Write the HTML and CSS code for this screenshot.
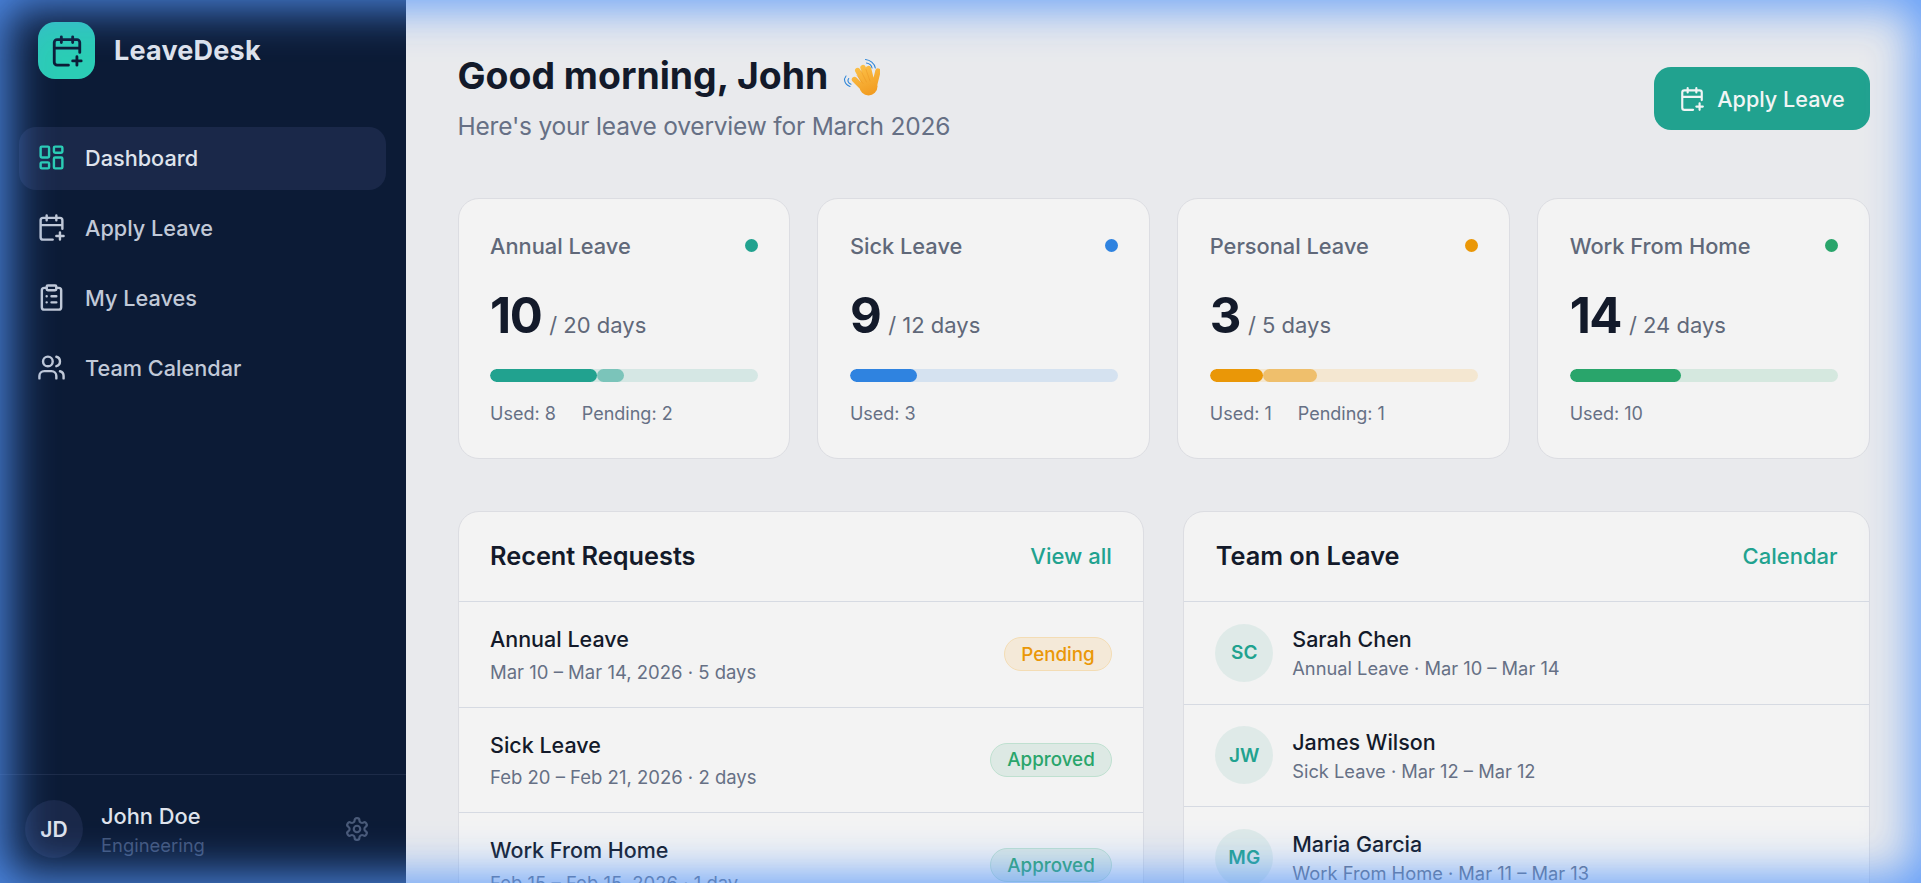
FILE: index.html
```html
<!DOCTYPE html>
<html lang="en">
<head>
<meta charset="utf-8">
<title>LeaveDesk</title>
<link rel="stylesheet" href="styles.css">
</head>
<body>
<svg class="sprites" aria-hidden="true">
  <symbol id="i-cal" viewBox="0 0 24 24"><path d="M8 2v4M16 2v4M21 13V6a2 2 0 0 0-2-2H5a2 2 0 0 0-2 2v14a2 2 0 0 0 2 2h8M3 10h18M16 19h6M19 16v6"/></symbol>
  <symbol id="i-dash" viewBox="0 0 24 24"><rect x="3" y="3" width="7" height="9" rx="1"/><rect x="14" y="3" width="7" height="5" rx="1"/><rect x="14" y="12" width="7" height="9" rx="1"/><rect x="3" y="16" width="7" height="5" rx="1"/></symbol>
  <symbol id="i-clip" viewBox="0 0 24 24"><rect x="8" y="2" width="8" height="4" rx="1"/><path d="M16 4h2a2 2 0 0 1 2 2v14a2 2 0 0 1-2 2H6a2 2 0 0 1-2-2V6a2 2 0 0 1 2-2h2M12 11h4M12 16h4M8 11h.01M8 16h.01"/></symbol>
  <symbol id="i-users" viewBox="0 0 24 24"><path d="M16 21v-2a4 4 0 0 0-4-4H6a4 4 0 0 0-4 4v2M22 21v-2a4 4 0 0 0-3-3.87M16 3.13a4 4 0 0 1 0 7.75"/><circle cx="9" cy="7" r="4"/></symbol>
  <symbol id="i-gear" viewBox="0 0 24 24"><path d="M12.22 2h-.44a2 2 0 0 0-2 2v.18a2 2 0 0 1-1 1.73l-.43.25a2 2 0 0 1-2 0l-.15-.08a2 2 0 0 0-2.73.73l-.22.38a2 2 0 0 0 .73 2.73l.15.1a2 2 0 0 1 1 1.72v.51a2 2 0 0 1-1 1.74l-.15.09a2 2 0 0 0-.73 2.73l.22.38a2 2 0 0 0 2.73.73l.15-.08a2 2 0 0 1 2 0l.43.25a2 2 0 0 1 1 1.73V20a2 2 0 0 0 2 2h.44a2 2 0 0 0 2-2v-.18a2 2 0 0 1 1-1.73l.43-.25a2 2 0 0 1 2 0l.15.08a2 2 0 0 0 2.73-.73l.22-.39a2 2 0 0 0-.73-2.73l-.15-.08a2 2 0 0 1-1-1.74v-.5a2 2 0 0 1 1-1.74l.15-.09a2 2 0 0 0 .73-2.73l-.22-.38a2 2 0 0 0-2.73-.73l-.15.08a2 2 0 0 1-2 0l-.43-.25a2 2 0 0 1-1-1.73V4a2 2 0 0 0-2-2z"/><circle cx="12" cy="12" r="3"/></symbol>
</svg>
<div class="app">
  <aside class="sidebar">
    <div class="brand">
      <div class="brand-mark"><svg class="ico ico-brand"><use href="#i-cal"/></svg></div>
      <span class="brand-name">LeaveDesk</span>
    </div>
    <nav class="nav">
      <a class="nav-item active"><svg class="ico ico-nav"><use href="#i-dash"/></svg><span>Dashboard</span></a>
      <a class="nav-item"><svg class="ico ico-nav"><use href="#i-cal"/></svg><span>Apply Leave</span></a>
      <a class="nav-item"><svg class="ico ico-nav"><use href="#i-clip"/></svg><span>My Leaves</span></a>
      <a class="nav-item"><svg class="ico ico-nav"><use href="#i-users"/></svg><span>Team Calendar</span></a>
    </nav>
    <div class="user">
      <div class="user-avatar">JD</div>
      <div class="user-info">
        <div class="user-name">John Doe</div>
        <div class="user-dept">Engineering</div>
      </div>
      <svg class="ico ico-gear"><use href="#i-gear"/></svg>
    </div>
  </aside>
  <main class="main">
    <header class="top">
      <div>
        <h1 class="greeting">Good morning, John
          <svg class="wave" viewBox="13 11 37 39" role="img" aria-label="waving hand">
            <defs>
              <linearGradient id="hand" gradientUnits="userSpaceOnUse" x1="28" y1="18" x2="42" y2="50">
                <stop offset="0" stop-color="#fcc24a"/>
                <stop offset="1" stop-color="#f19a1f"/>
              </linearGradient>
            </defs>
            <path class="wave-lines" d="M35.500 13.500c4.500.5 9 3.500 9.800 8.500M36.500 17c3 .5 5 2.500 5.500 5M16 30c-2.500 3-2 8 4 10.500M18.700 32.500c-1.500 2-.8 4.500 2.300 5.800"/>
            <g class="wave-hand">
              <path d="M24.500 33.500 33 42M27.700 24.500 35.500 39M33 21.500 39 38M38.500 22.500 42 37M48 25 44.500 39"/>
              <circle cx="38.500" cy="40.500" r="9"/>
            </g>
            <path class="wave-creases" d="M27 29.500 33 37.500M31 25 36.500 36M36 23.500 40 35"/>
          </svg>
        </h1>
        <p class="subtitle">Here's your leave overview for March 2026</p>
      </div>
      <button class="apply-btn"><svg class="ico ico-btn"><use href="#i-cal"/></svg>Apply Leave</button>
    </header>

    <section class="stats">
      <article class="stat">
        <div class="stat-head"><span class="stat-label">Annual Leave</span><i class="dot c-teal"></i></div>
        <div class="stat-value"><b>10</b><span>/ 20 days</span></div>
        <div class="bar t-teal"><i class="c-teal" style="width:40%"></i><i class="c-teal pend" style="width:10%"></i></div>
        <div class="stat-foot"><span>Used: 8</span><span>Pending: 2</span></div>
      </article>
      <article class="stat">
        <div class="stat-head"><span class="stat-label">Sick Leave</span><i class="dot c-blue"></i></div>
        <div class="stat-value"><b>9</b><span>/ 12 days</span></div>
        <div class="bar t-blue"><i class="c-blue" style="width:25%"></i></div>
        <div class="stat-foot"><span>Used: 3</span></div>
      </article>
      <article class="stat">
        <div class="stat-head"><span class="stat-label">Personal Leave</span><i class="dot c-amber"></i></div>
        <div class="stat-value"><b>3</b><span>/ 5 days</span></div>
        <div class="bar t-amber"><i class="c-amber" style="width:20%"></i><i class="c-amber pend" style="width:20%"></i></div>
        <div class="stat-foot"><span>Used: 1</span><span>Pending: 1</span></div>
      </article>
      <article class="stat">
        <div class="stat-head"><span class="stat-label">Work From Home</span><i class="dot c-green"></i></div>
        <div class="stat-value"><b>14</b><span>/ 24 days</span></div>
        <div class="bar t-green"><i class="c-green" style="width:41.700%"></i></div>
        <div class="stat-foot"><span>Used: 10</span></div>
      </article>
    </section>

    <section class="panels">
      <div class="panel">
        <div class="panel-head"><h2>Recent Requests</h2><a>View all</a></div>
        <div class="req">
          <div><div class="row-title">Annual Leave</div><div class="req-sub">Mar 10 – Mar 14, 2026 · 5 days</div></div>
          <span class="badge pending">Pending</span>
        </div>
        <div class="req">
          <div><div class="row-title">Sick Leave</div><div class="req-sub">Feb 20 – Feb 21, 2026 · 2 days</div></div>
          <span class="badge approved">Approved</span>
        </div>
        <div class="req">
          <div><div class="row-title">Work From Home</div><div class="req-sub">Feb 15 – Feb 15, 2026 · 1 day</div></div>
          <span class="badge approved">Approved</span>
        </div>
      </div>
      <div class="panel">
        <div class="panel-head"><h2>Team on Leave</h2><a>Calendar</a></div>
        <div class="mate">
          <div class="mate-avatar">SC</div>
          <div><div class="row-title">Sarah Chen</div><div class="mate-sub">Annual Leave · Mar 10 – Mar 14</div></div>
        </div>
        <div class="mate">
          <div class="mate-avatar">JW</div>
          <div><div class="row-title">James Wilson</div><div class="mate-sub">Sick Leave · Mar 12 – Mar 12</div></div>
        </div>
        <div class="mate">
          <div class="mate-avatar">MG</div>
          <div><div class="row-title">Maria Garcia</div><div class="mate-sub">Work From Home · Mar 11 – Mar 13</div></div>
        </div>
      </div>
    </section>
  </main>
</div>
<div class="glow"></div>
</body>
</html>
```

FILE: styles.css
```css
* { box-sizing: border-box; margin: 0; padding: 0; }
html, body { height: 100%; overflow: hidden; }
body { font-family: "Inter", "Noto Sans", sans-serif; background: #e9eaed; color: #131a2a; }
.sprites { display: none; }
.ico { fill: none; stroke: currentColor; stroke-width: 2; stroke-linecap: round; stroke-linejoin: round; flex: none; }
.ico-nav { width: 29px; height: 29px; }
.ico-btn { width: 26px; height: 26px; }
.ico-brand { width: 34px; height: 34px; color: #0c1b36; }
.ico-gear { width: 26px; height: 26px; color: #4a5a78; }

.app { display: flex; height: 883px; overflow: hidden; }
.sidebar { width: 406px; flex: none; background: #0c1b36; display: flex; flex-direction: column; }
.brand { display: flex; align-items: center; gap: 19px; padding: 22px 38px 0; }
.brand-mark { width: 57px; height: 57px; border-radius: 17px; background: #2bcdb5; display: flex; align-items: center; justify-content: center; }
.brand-name { font-size: 27px; font-weight: 700; color: #dfe3ec; letter-spacing: .2px; }
.nav { display: flex; flex-direction: column; gap: 7px; padding: 48px 20px 0 19px; flex: 1; }
.nav-item { height: 63px; display: flex; align-items: center; gap: 19px; padding: 0 18px 2px; border-radius: 17px; color: #c1c9d8; font-size: 21.700px; font-weight: 500; }
.nav-item.active { background: #1a2849; color: #dfe3ec; }
.nav-item.active .ico { color: #2bcdb5; }
.user { border-top: 1px solid #1d2b48; height: 109px; display: flex; align-items: center; gap: 18px; padding: 0 36px 0 25px; }
.user-avatar { width: 58px; height: 58px; border-radius: 50%; background: #1a2849; color: #dfe3ec; font-size: 21px; font-weight: 600; display: flex; align-items: center; justify-content: center; flex: none; }
.user-info { flex: 1; padding-top: 2px; }
.user-name { font-size: 21.800px; font-weight: 500; color: #dfe3ec; line-height: 30px; }
.user-dept { font-size: 18.400px; color: #43567a; line-height: 28px; }

.main { flex: 1; min-width: 0; padding: 0 51px 0 51.500px; }
.top { display: flex; justify-content: space-between; align-items: flex-start; height: 198px; padding-top: 50px; }
.greeting { font-size: 37.400px; font-weight: 700; line-height: 52px; display: flex; align-items: center; gap: 15px; }
.wave { width: 37px; height: 39px; flex: none; }
.wave-lines { fill: none; stroke: #2f86d8; stroke-width: 1.100; stroke-linecap: round; }
.wave-hand { fill: url(#hand); stroke: url(#hand); stroke-width: 5.400; stroke-linecap: round; }
.wave-hand circle { stroke: none; }
.wave-creases { fill: none; stroke: #e88f1c; stroke-width: .6; stroke-linecap: round; opacity: .7; }
.subtitle { font-size: 24.500px; letter-spacing: -.2px; color: #667085; line-height: 38px; margin-top: 5px; }
.apply-btn { width: 216px; height: 63px; margin-top: 17px; border: 0; border-radius: 17px; background: #21a28f; color: #f1f5f5; font: 500 21.600px "Inter", sans-serif; display: flex; align-items: center; justify-content: center; gap: 12px; }

.stats { display: grid; grid-template-columns: repeat(4, 1fr); gap: 27px; }
.stat { height: 261px; background: #f3f3f3; border: 1px solid #dcdde2; border-radius: 21px; padding: 32px 31.500px; }
.stat-head { display: flex; justify-content: space-between; align-items: center; height: 29px; }
.stat-label { font-size: 21.800px; font-weight: 500; color: #606879; }
.dot { width: 13px; height: 13px; border-radius: 50%; display: block; }
.c-teal { background: #21a28f; }
.c-blue { background: #2f83e0; }
.c-amber { background: #ea9707; }
.c-green { background: #29a56b; }
.stat-value { display: flex; align-items: baseline; gap: 8px; margin-top: 25px; height: 62px; }
.stat-value b { font-size: 49px; font-weight: 700; line-height: 62px; letter-spacing: -1.500px; color: #131a2a; }
.stat-value span { font-size: 22px; color: #606879; }
.bar { height: 13px; border-radius: 7px; margin-top: 22px; display: flex; overflow: hidden; }
.bar i { display: block; height: 100%; border-radius: 7px; }
.bar .pend { opacity: .5; }
.t-teal { background: #d5e7e4; }
.t-blue { background: #d5e2f0; }
.t-amber { background: #f4e7d1; }
.t-green { background: #d5e8df; }
.stat-foot { display: flex; gap: 26px; margin-top: 18px; font-size: 18px; color: #667085; line-height: 28px; }

.panels { display: grid; grid-template-columns: 1fr 1fr; gap: 39px; margin-top: 52px; }
.panel { background: #f3f3f3; border: 1px solid #dcdde2; border-radius: 21px 21px 0 0; overflow: hidden; }
.panel-head { height: 90px; display: flex; justify-content: space-between; align-items: center; padding: 0 31.500px 2px; border-bottom: 1px solid #d6dae2; }
.panel-head h2 { font-size: 25.300px; font-weight: 600; color: #131a2a; }
.panel-head a { font-size: 22px; font-weight: 500; color: #21a28f; }
.req { height: 105.500px; padding: 0 31.500px; display: flex; justify-content: space-between; align-items: center; border-bottom: 1px solid #d6dae2; }
.row-title { font-size: 21.500px; font-weight: 500; color: #131a2a; line-height: 32px; }
.req-sub { font-size: 18.500px; color: #667085; line-height: 28px; margin-top: 2.500px; }
.badge { height: 34px; padding: 0 16px; border-radius: 17px; border: 1px solid; font-size: 18.800px; font-weight: 500; display: flex; align-items: center; }
.pending { color: #ea9707; background: #f4e9d8; border-color: #f3dcb4; }
.approved { color: #29a56b; background: #dde9e4; border-color: #bfe0d0; }
.mate { height: 102.600px; padding: 0 31px; display: flex; align-items: center; gap: 19px; border-bottom: 1px solid #d6dae2; }
.mate-avatar { width: 58px; height: 58px; border-radius: 50%; background: #dfeae8; color: #21a28f; font-size: 19px; font-weight: 600; display: flex; align-items: center; justify-content: center; flex: none; }
.mate-sub { font-size: 18.300px; color: #667085; line-height: 28px; margin-top: -1px; }

.glow { position: fixed; inset: 0; pointer-events: none; box-shadow: inset 0 0 46px 7px rgba(85, 150, 250, .92); }
```
